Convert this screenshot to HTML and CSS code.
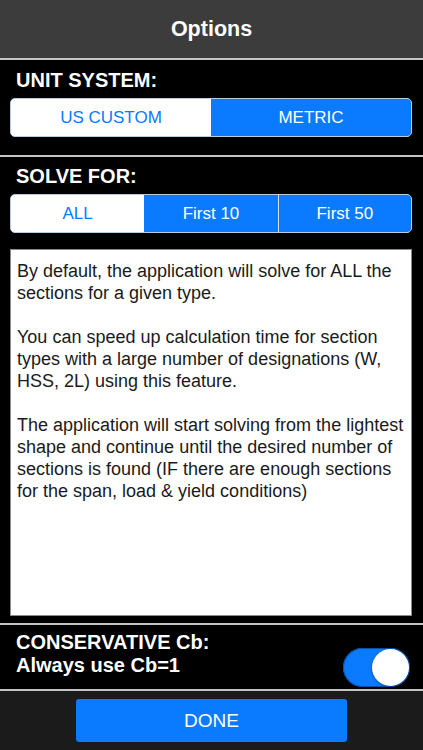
FILE: index.html
```html
<!DOCTYPE html>
<html>
<head>
<meta charset="utf-8">
<link rel="stylesheet" href="styles.css">
</head>
<body>
<div class="screen">
  <header class="nav">Options</header>
  <div class="sep"></div>
  <section class="sec sec-unit">
    <h2 class="sec-title">UNIT SYSTEM:</h2>
    <div class="seg seg-2">
      <div class="seg-item">US CUSTOM</div>
      <div class="seg-item on">METRIC</div>
    </div>
  </section>
  <div class="sep"></div>
  <section class="sec sec-solve">
    <h2 class="sec-title">SOLVE FOR:</h2>
    <div class="seg seg-3">
      <div class="seg-item">ALL</div>
      <div class="seg-item on">First 10</div>
      <div class="seg-item on">First 50</div>
    </div>
    <div class="info">
      <p>By default, the application will solve for ALL the sections for a given type.</p>
      <p>You can speed up calculation time for section types with a large number of designations (W, HSS, 2L) using this feature.</p>
      <p>The application will start solving from the lightest shape and continue until the desired number of sections is found (IF there are enough sections for the span, load &amp; yield conditions)</p>
    </div>
  </section>
  <div class="sep"></div>
  <section class="sec-cb">
    <div class="cb-text">
      <div>CONSERVATIVE Cb:</div>
      <div>Always use Cb=1</div>
    </div>
    <div class="switch"><div class="knob"></div></div>
  </section>
  <div class="sep"></div>
  <footer class="foot">
    <div class="done">DONE</div>
  </footer>
</div>
</body>
</html>
```
FILE: styles.css
```css
* { box-sizing: border-box; margin: 0; padding: 0; }
html, body { background: #000; }
body { font-family: "Liberation Sans", Arial, sans-serif; }
.screen {
  width: 423px;
  height: 750px;
  display: flex;
  flex-direction: column;
  background: #000;
  color: #fff;
}
.nav {
  height: 58px;
  background: #3c3c3c;
  display: flex;
  align-items: center;
  justify-content: center;
  font-size: 21.5px;
  font-weight: bold;
  padding-top: 1px;
}
.sep {
  height: 2px;
  background: #c4c4c4;
  flex: none;
}
.sec {
  display: flex;
  flex-direction: column;
  padding: 0 11px 0 10px;
}
.sec-unit { height: 95px; padding-top: 8px; }
.sec-solve { height: 466px; padding-top: 7px; }
.sec-title {
  font-size: 20px;
  font-weight: bold;
  line-height: 24px;
  padding-left: 6px;
  margin-bottom: 6px;
}
.seg {
  height: 39px;
  display: grid;
  border: 1px solid #b9cde6;
  border-radius: 5px;
  overflow: hidden;
  background: #fff;
}
.seg-2 { grid-template-columns: 1fr 1fr; }
.seg-3 { grid-template-columns: 1fr 1fr 1fr; }
.seg-item {
  display: flex;
  align-items: center;
  justify-content: center;
  font-size: 17px;
  color: #0a7aff;
  background: #fff;
}
.seg-item.on {
  background: #0a7aff;
  color: #fff;
}
.seg-3 .seg-item.on + .seg-item.on { border-left: 1px solid #cfe2fb; }
.info {
  margin-top: 16px;
  height: 367px;
  background: #fff;
  border: 1px solid #8a8a8a;
  color: #1a1a1a;
  font-size: 18px;
  line-height: 22px;
  padding: 10px 6px 0 6px;
}
.info p + p { margin-top: 22px; }
.sec-cb {
  height: 64px;
  display: flex;
  justify-content: space-between;
  align-items: flex-start;
  padding: 6px 13px 0 16px;
}
.cb-text {
  font-size: 20px;
  font-weight: bold;
  line-height: 23px;
}
.switch {
  margin-top: 17px;
  width: 67px;
  height: 39px;
  border-radius: 20px;
  background: #0a7aff;
  box-shadow: inset 0 0 0 1px #0b4fa8;
  display: flex;
  justify-content: flex-end;
  align-items: center;
  padding-right: 1px;
}
.knob {
  width: 37px;
  height: 37px;
  border-radius: 50%;
  background: #fff;
  box-shadow: 0 1px 3px rgba(0,0,0,0.35);
}
.foot {
  flex: 1;
  background: #1b1b1b;
  display: flex;
  justify-content: center;
  padding-top: 8px;
}
.done {
  width: 271px;
  height: 43px;
  background: #0a7aff;
  border-radius: 3px;
  display: flex;
  align-items: center;
  justify-content: center;
  font-size: 19px;
  color: #fff;
}
```
